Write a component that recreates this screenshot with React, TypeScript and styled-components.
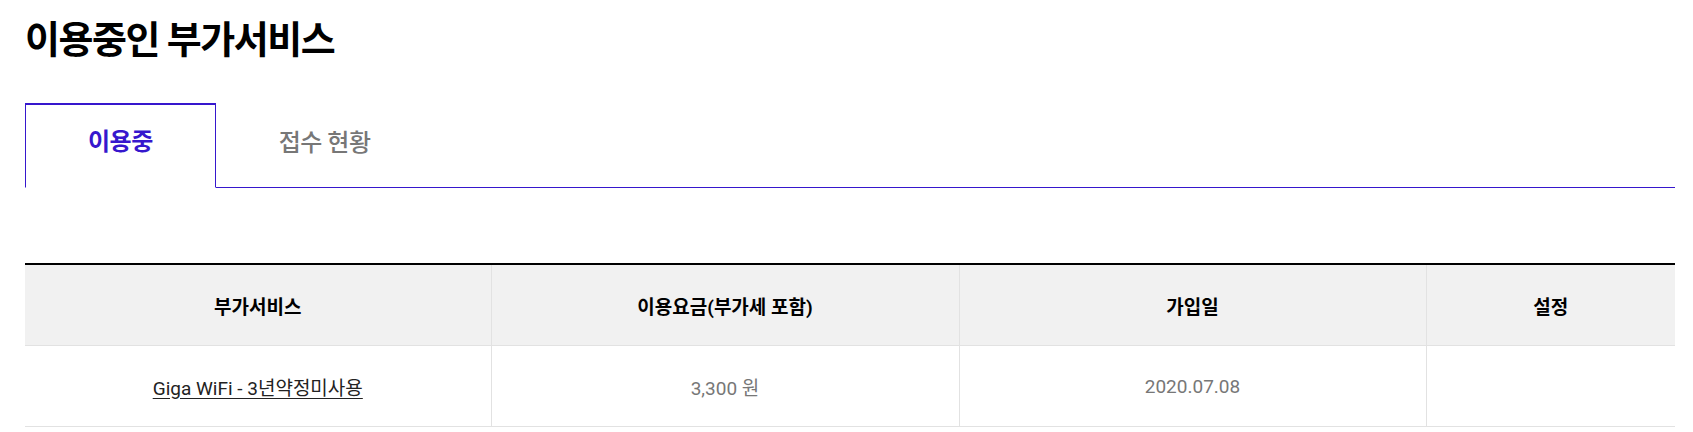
import React, { useState } from 'react';
import styled, { createGlobalStyle } from 'styled-components';

const GlobalStyle = createGlobalStyle`
  html, body {
    margin: 0;
    padding: 0;
    background: #fff;
  }
  body {
    font-family: Roboto, "Noto Sans CJK KR", "Noto Sans", sans-serif;
    color: #000;
  }
`;

const Page = styled.div`
  width: 1650px;
  padding: 16px 0 0 25px;
`;

const Title = styled.h2`
  margin: 0;
  font-size: 38px;
  font-weight: 700;
  line-height: 48px;
  letter-spacing: -1.5px;
  color: #000;
`;

const TabList = styled.ul`
  display: flex;
  margin: 39px 0 0;
  padding: 0;
  list-style: none;
  border-bottom: 1px solid #3617cd;
`;

const Tab = styled.li<{ $active?: boolean }>`
  box-sizing: border-box;
  display: flex;
  align-items: center;
  justify-content: center;
  height: 85px;
  padding: 0 62px 13px;
  margin-bottom: -1px;
  font-size: 24px;
  letter-spacing: -0.5px;
  cursor: pointer;
  font-weight: ${p => (p.$active ? 700 : 500)};
  color: ${p => (p.$active ? '#3617cd' : '#777')};
  background: ${p => (p.$active ? '#fff' : 'transparent')};
  border: 1px solid ${p => (p.$active ? '#3617cd' : 'transparent')};
  border-top-width: 2px;
  border-bottom: ${p => (p.$active ? '1px solid #fff' : 'none')};
`;

const Table = styled.table`
  width: 100%;
  margin-top: 75px;
  border-collapse: collapse;
  table-layout: fixed;
  border-top: 2px solid #000;
`;

const HeadCell = styled.th`
  height: 80px;
  padding: 0;
  background: #f1f1f1;
  font-size: 19px;
  font-weight: 700;
  color: #000;
  text-align: center;
  border-bottom: 1px solid #e2e2e2;
  border-right: 1px solid #e2e2e2;

  &:last-child {
    border-right: none;
  }
`;

const Cell = styled.td`
  height: 80px;
  padding: 0;
  font-size: 19px;
  color: #777;
  text-align: center;
  border-bottom: 1px solid #e2e2e2;
  border-right: 1px solid #e2e2e2;

  &:last-child {
    border-right: none;
  }
`;

const ServiceLink = styled.a`
  color: #222;
  text-decoration: underline;
  text-underline-offset: 3px;
  cursor: pointer;
`;

const rows = [
  { name: 'Giga WiFi - 3년약정미사용', fee: '3,300 원', date: '2020.07.08' },
];

export default function App() {
  const [tab, setTab] = useState(0);
  const tabs = ['이용중', '접수 현황'];

  return (
    <Page>
      <GlobalStyle />
      <Title>이용중인 부가서비스</Title>
      <TabList>
        {tabs.map((t, i) => (
          <Tab key={t} $active={tab === i} onClick={() => setTab(i)}>
            {t}
          </Tab>
        ))}
      </TabList>
      <Table>
        <colgroup>
          <col style={{ width: 466 }} />
          <col style={{ width: 468 }} />
          <col style={{ width: 467 }} />
          <col />
        </colgroup>
        <thead>
          <tr>
            <HeadCell>부가서비스</HeadCell>
            <HeadCell>이용요금(부가세 포함)</HeadCell>
            <HeadCell>가입일</HeadCell>
            <HeadCell>설정</HeadCell>
          </tr>
        </thead>
        <tbody>
          {rows.map(r => (
            <tr key={r.name}>
              <Cell>
                <ServiceLink>{r.name}</ServiceLink>
              </Cell>
              <Cell>{r.fee}</Cell>
              <Cell>{r.date}</Cell>
              <Cell />
            </tr>
          ))}
        </tbody>
      </Table>
    </Page>
  );
}
